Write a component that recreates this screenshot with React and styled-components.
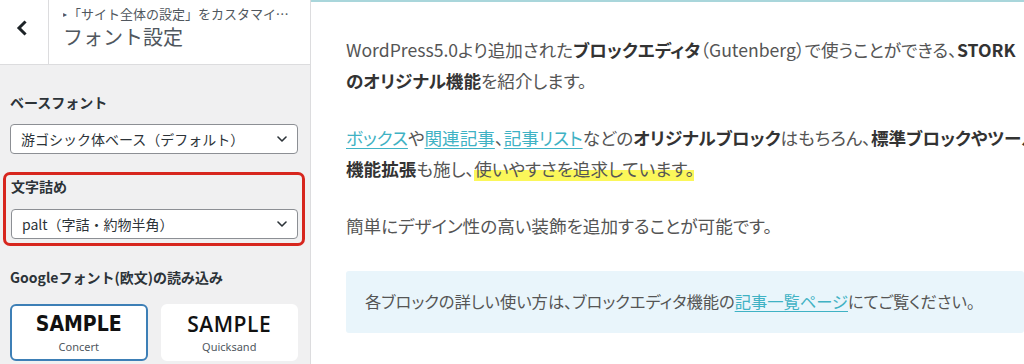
import React from "react";
import styled, { createGlobalStyle, css } from "styled-components";

const Global = createGlobalStyle`
  html, body { margin: 0; padding: 0; background: #fff; }
  body {
    width: 1024px; height: 364px; overflow: hidden;
    font-family: "Noto Sans CJK JP", "Noto Sans", sans-serif;
  }
  * { box-sizing: border-box; }
`;

const Page = styled.div`
  display: flex;
  width: 1024px;
  height: 364px;
  overflow: hidden;
`;

const Sidebar = styled.aside`
  width: 311px;
  flex: none;
  background: #f0f0f1;
  border-right: 1px solid #dcdcde;
  display: flex;
  flex-direction: column;
`;

const Header = styled.header`
  height: 65px;
  flex: none;
  display: flex;
  background: #fff;
  border-bottom: 1px solid #dcdcde;
`;

const BackButton = styled.button`
  width: 49px;
  height: 100%;
  border: 0;
  border-right: 1px solid #dcdcde;
  background: #fff;
  display: flex;
  align-items: center;
  justify-content: center;
  padding: 0 4px 8px 0;
  color: #1d2327;
`;

const Titles = styled.div`
  flex: 1;
  min-width: 0;
  padding: 5px 12px 0 14px;
  color: #50575e;
`;

const Crumb = styled.div`
  font-size: 13px;
  line-height: 18px;
  white-space: nowrap;
  overflow: hidden;
  text-overflow: ellipsis;
`;

const Tri = styled.span`
  font-size: 8px;
  vertical-align: 2px;
  margin-right: 1px;
`;

const Title = styled.div`
  font-size: 20px;
  line-height: 28px;
  margin-top: 0;
`;

const Controls = styled.div`
  padding: 27px 12px 0 10px;
  display: flex;
  flex-direction: column;
`;

const Section = styled.section`
  display: flex;
  flex-direction: column;
  gap: 12px;
  margin-bottom: 19px;
  ${(p) =>
    p.$highlight &&
    css`
      margin: -1px -7px 21px -7px;
      border: 3px solid #d7261e;
      border-radius: 7px;
      padding: 1px 4px 4px 5px;
      gap: 13px;
    `}
`;

const Label = styled.div`
  font-size: 14px;
  line-height: 20px;
  font-weight: 700;
  color: #2c3338;
`;

const SelectBox = styled.div`
  height: 30px;
  border: 1px solid #8c8f94;
  border-radius: 4px;
  background: #fff;
  display: flex;
  align-items: center;
  justify-content: space-between;
  padding: 0 10px 0 10px;
  font-size: 14px;
  color: #2c3338;
`;

const Cards = styled.div`
  display: grid;
  grid-template-columns: 1fr 1fr;
  gap: 13px;
  margin-top: 17px;
`;

const Card = styled.div`
  height: 57px;
  background: #fff;
  border-radius: 6px;
  border: 2px solid ${(p) => (p.$active ? "#3d7fb6" : "#fff")};
  display: flex;
  flex-direction: column;
  align-items: center;
  justify-content: center;
  padding-top: 1px;
`;

const Sample = styled.div`
  font-size: ${(p) => p.$size}px;
  line-height: 24px;
  color: #111;
  font-family: ${(p) => p.$font};
  font-weight: ${(p) => p.$weight};
  letter-spacing: ${(p) => p.$ls}px;
`;

const Caption = styled.div`
  font-size: 11px;
  line-height: 16px;
  margin-top: 3px;
  color: #50575e;
  font-family: "Noto Sans", sans-serif;
`;

const Preview = styled.main`
  flex: 1;
  min-width: 0;
  background: #fff;
  border-top: 2px solid #a9d6db;
  padding: 32px 0 0 35px;
  overflow: hidden;
  font-family: "Noto Sans CJK JP", sans-serif;
  font-feature-settings: "palt";
  font-size: 17.6px;
  color: #555;
`;

const Para = styled.p`
  margin: 0 0 26px;
  line-height: 31px;
  white-space: nowrap;
`;

const B = styled.strong`
  font-weight: 700;
  color: #333;
`;

const Link = styled.a`
  color: #3fb2c4;
  text-decoration: underline;
  text-decoration-color: #3fb2c4;
  text-underline-offset: 3px;
`;

const Marker = styled.span`
  background: linear-gradient(transparent 55%, #fbf75a 55%);
`;

const InfoBox = styled.div`
  margin-top: 30px;
  background: #e9f5fb;
  border-radius: 3px;
  padding: 15px 19px 16px;
  line-height: 31px;
  white-space: nowrap;
  font-size: 16.3px;
`;

const Chevron = ({ size = 10, w = 2 }) => (
  <svg width={size} height={size * 0.6} viewBox="0 0 10 6" fill="none">
    <path d="M1 1l4 4 4-4" stroke="#2c3338" strokeWidth={w} strokeLinecap="round" strokeLinejoin="round" />
  </svg>
);

const BackIcon = () => (
  <svg width="12" height="16" viewBox="0 0 12 16" fill="none">
    <path d="M8.5 2.5L3 8l5.5 5.5" stroke="#1d2327" strokeWidth="3" strokeLinecap="square" />
  </svg>
);

export default function App() {
  return (
    <>
      <Global />
      <Page>
        <Sidebar>
          <Header>
            <BackButton aria-label="戻る">
              <BackIcon />
            </BackButton>
            <Titles>
              <Crumb>
                <Tri>▸</Tri>「サイト全体の設定」をカスタマイズ中
              </Crumb>
              <Title>フォント設定</Title>
            </Titles>
          </Header>
          <Controls>
            <Section>
              <Label>ベースフォント</Label>
              <SelectBox>
                <span>游ゴシック体ベース（デフォルト）</span>
                <Chevron size={10} w={1.6} />
              </SelectBox>
            </Section>
            <Section $highlight>
              <Label>文字詰め</Label>
              <SelectBox>
                <span>palt（字詰・約物半角）</span>
                <Chevron size={10} w={1.6} />
              </SelectBox>
            </Section>
            <Label>Googleフォント(欧文)の読み込み</Label>
            <Cards>
              <Card $active>
                <Sample $font={'"DejaVu Sans Condensed", "DejaVu Sans", sans-serif'} $weight={700} $size={21} $ls={0}>
                  SAMPLE
                </Sample>
                <Caption>Concert</Caption>
              </Card>
              <Card>
                <Sample $font={'"Open Sans", sans-serif'} $weight={600} $size={21} $ls={0.5}>
                  SAMPLE
                </Sample>
                <Caption>Quicksand</Caption>
              </Card>
            </Cards>
          </Controls>
        </Sidebar>
        <Preview>
          <Para>
            WordPress5.0より追加された<B>ブロックエディタ</B>（Gutenberg）で使うことができる、<B>STORK</B>
            <br />
            <B>のオリジナル機能</B>を紹介します。
          </Para>
          <Para>
            <Link>ボックス</Link>や<Link>関連記事</Link>、<Link>記事リスト</Link>などの<B>オリジナルブロック</B>はもちろん、<B>標準ブロックやツールバーにも</B>
            <br />
            <B>機能拡張</B>も施し、<Marker>使いやすさを追求しています。</Marker>
          </Para>
          <Para>簡単にデザイン性の高い装飾を追加することが可能です。</Para>
          <InfoBox>
            各ブロックの詳しい使い方は、ブロックエディタ機能の<Link>記事一覧ページ</Link>にてご覧ください。
          </InfoBox>
        </Preview>
      </Page>
    </>
  );
}
